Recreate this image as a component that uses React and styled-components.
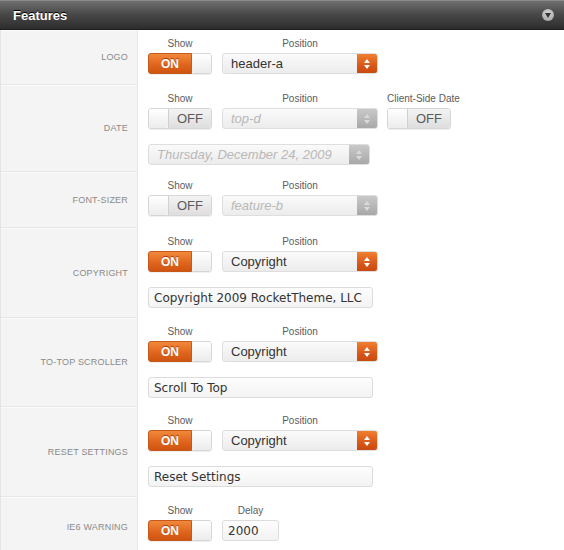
import React from "react";
import styled, { createGlobalStyle, css } from "styled-components";

const GlobalStyle = createGlobalStyle`
  body {
    margin: 0;
    background: #ffffff;
    font-family: "Liberation Sans", Arial, sans-serif;
  }
`;

const Panel = styled.div`
  width: 564px;
  height: 550px;
  overflow: hidden;
  background: #fff;
`;

const Header = styled.div`
  height: 28px;
  display: flex;
  align-items: center;
  justify-content: space-between;
  padding: 0 10px 0 13px;
  background: linear-gradient(#6f6f6f, #4a4a4a 45%, #2c2c2c);
  border-top: 1px solid #8a8a8a;
  border-bottom: 1px solid #1e1e1e;
`;

const Title = styled.h1`
  margin: 0;
  font-size: 13px;
  font-weight: bold;
  color: #fff;
  text-shadow: 0 -1px 0 #000;
`;

const Collapse = styled.span`
  width: 12px;
  height: 12px;
  border-radius: 50%;
  background: radial-gradient(circle at 50% 35%, #d8d8d8, #9a9a9a);
  display: flex;
  align-items: center;
  justify-content: center;
`;

const Row = styled.div`
  display: flex;
  min-height: ${({ h }) => h}px;
`;

const Label = styled.div`
  width: 138px;
  flex: none;
  box-sizing: border-box;
  display: flex;
  align-items: center;
  justify-content: flex-end;
  padding-right: 9px;
  background: #f4f4f4;
  border-right: 1px solid #e8e8e8;
  border-left: 1px solid #e4e4e4;
  border-bottom: 1px solid #e6e6e6;
  box-shadow: inset 0 1px 0 #fbfbfb;
  font-size: 9px;
  color: #8a8a8a;
  letter-spacing: 0.2px;
  text-transform: uppercase;
`;

const Body = styled.div`
  flex: 1;
  padding: 8px 0 0 10px;
  display: flex;
  flex-direction: column;
  gap: 15px;
`;

const Line = styled.div`
  display: flex;
  gap: 10px;
  align-items: flex-end;
`;

const Field = styled.div`
  display: flex;
  flex-direction: column;
  align-items: ${({ start }) => (start ? "flex-start" : "center")};
  gap: 3px;
  margin-left: ${({ start }) => (start ? "-1px" : "0")};
`;

const Caption = styled.span`
  font-size: 10px;
  color: #5c5c5c;
  line-height: 12px;
  white-space: nowrap;
`;

const Toggle = styled.div`
  width: 64px;
  height: 21px;
  box-sizing: border-box;
  border-radius: 3px;
  display: flex;
  border: 1px solid #d6d6d6;
  flex-direction: ${({ on }) => (on ? "row" : "row-reverse")};
  box-shadow: 0 1px 0 #efefef;
`;

const ToggleFace = styled.span`
  flex: 1;
  display: flex;
  align-items: center;
  justify-content: center;
  font-size: 12px;
  font-weight: bold;
  ${({ on }) =>
    on
      ? css`
          margin: -1px 0 -1px -1px;
          border: 1px solid #c7581b;
          border-radius: 3px 0 0 3px;
          color: #fff;
          background: linear-gradient(#f1893b, #e0661f 55%, #cf5410);
          text-shadow: 0 -1px 0 #a7410a;
        `
      : css`
          color: #5a5a5a;
          font-weight: normal;
          font-size: 13px;
          border-radius: 0 2px 2px 0;
          background: linear-gradient(#f3f3f3, #dedede);
          border-left: 1px solid #d0d0d0;
        `}
`;

const Knob = styled.span`
  width: 19px;
  flex: none;
  border-radius: 2px;
  background: linear-gradient(#ffffff, #ececec);
`;

const Select = styled.div`
  width: ${({ w }) => w}px;
  height: 21px;
  box-sizing: border-box;
  border-radius: 3px;
  display: flex;
  overflow: hidden;
  border: 1px solid #dedede;
  background: linear-gradient(#fafafa, #ececec);
`;

const SelectText = styled.span`
  flex: 1;
  display: flex;
  align-items: center;
  padding-left: 8px;
  font-size: 13px;
  ${({ disabled }) =>
    disabled
      ? css`
          color: #b8b8b8;
          font-style: italic;
        `
      : css`
          color: #333;
        `}
`;

const Arrows = styled.span`
  width: 20px;
  flex: none;
  display: flex;
  align-items: center;
  justify-content: center;
  background: ${({ disabled }) =>
    disabled
      ? "linear-gradient(#c9c9c9, #a8a8a8)"
      : "linear-gradient(#f07f30, #d8581a 60%, #c94a10)"};
`;

const TextBox = styled.div`
  width: ${({ w }) => w}px;
  height: 21px;
  box-sizing: border-box;
  border: 1px solid #dcdcdc;
  border-radius: 3px;
  background: linear-gradient(#fdfdfd, #f3f3f3);
  display: flex;
  align-items: center;
  padding-left: 5px;
  font-family: "DejaVu Sans", Verdana, sans-serif;
  font-size: 12px;
  color: #333;
`;

const SwitchControl = ({ on }) => (
  <Toggle on={on}>
    {on ? <ToggleFace on>ON</ToggleFace> : <ToggleFace>OFF</ToggleFace>}
    <Knob />
  </Toggle>
);

const UpDown = ({ disabled }) => (
  <Arrows disabled={disabled}>
    <svg width="8" height="12" viewBox="0 0 8 12">
      <path d="M4 1 L7 5 H1 Z M4 11 L7 7 H1 Z" fill={disabled ? "#d9d9d9" : "#fff"} />
    </svg>
  </Arrows>
);

const SelectControl = ({ value, w = 156, disabled }) => (
  <Select w={w}>
    <SelectText disabled={disabled}>{value}</SelectText>
    <UpDown disabled={disabled} />
  </Select>
);

const ShowField = ({ on, caption = "Show", start }) => (
  <Field start={start}>
    <Caption>{caption}</Caption>
    <SwitchControl on={on} />
  </Field>
);

const PositionField = ({ value, disabled }) => (
  <Field>
    <Caption>Position</Caption>
    <SelectControl value={value} disabled={disabled} />
  </Field>
);

export default function App() {
  return (
    <>
      <GlobalStyle />
      <Panel>
        <Header>
          <Title>Features</Title>
          <Collapse>
            <svg width="6" height="5" viewBox="0 0 6 5">
              <path d="M0 0 H6 L3 5 Z" fill="#333" />
            </svg>
          </Collapse>
        </Header>

        <Row h={55}>
          <Label>Logo</Label>
          <Body>
            <Line>
              <ShowField on />
              <PositionField value="header-a" />
            </Line>
          </Body>
        </Row>

        <Row h={87}>
          <Label>Date</Label>
          <Body>
            <Line>
              <ShowField on={false} />
              <PositionField value="top-d" disabled />
              <ShowField on={false} caption="Client-Side Date" start />
            </Line>
            <Line>
              <SelectControl value="Thursday, December 24, 2009" w={222} disabled />
            </Line>
          </Body>
        </Row>

        <Row h={56}>
          <Label>Font-Sizer</Label>
          <Body>
            <Line>
              <ShowField on={false} />
              <PositionField value="feature-b" disabled />
            </Line>
          </Body>
        </Row>

        <Row h={90}>
          <Label>Copyright</Label>
          <Body>
            <Line>
              <ShowField on />
              <PositionField value="Copyright" />
            </Line>
            <Line>
              <TextBox w={225}>Copyright 2009 RocketTheme, LLC</TextBox>
            </Line>
          </Body>
        </Row>

        <Row h={89}>
          <Label>To-Top Scroller</Label>
          <Body>
            <Line>
              <ShowField on />
              <PositionField value="Copyright" />
            </Line>
            <Line>
              <TextBox w={225}>Scroll To Top</TextBox>
            </Line>
          </Body>
        </Row>

        <Row h={90}>
          <Label>Reset Settings</Label>
          <Body>
            <Line>
              <ShowField on />
              <PositionField value="Copyright" />
            </Line>
            <Line>
              <TextBox w={225}>Reset Settings</TextBox>
            </Line>
          </Body>
        </Row>

        <Row h={60}>
          <Label>IE6 Warning</Label>
          <Body>
            <Line>
              <ShowField on />
              <Field>
                <Caption>Delay</Caption>
                <TextBox w={57}>2000</TextBox>
              </Field>
            </Line>
          </Body>
        </Row>
      </Panel>
    </>
  );
}
